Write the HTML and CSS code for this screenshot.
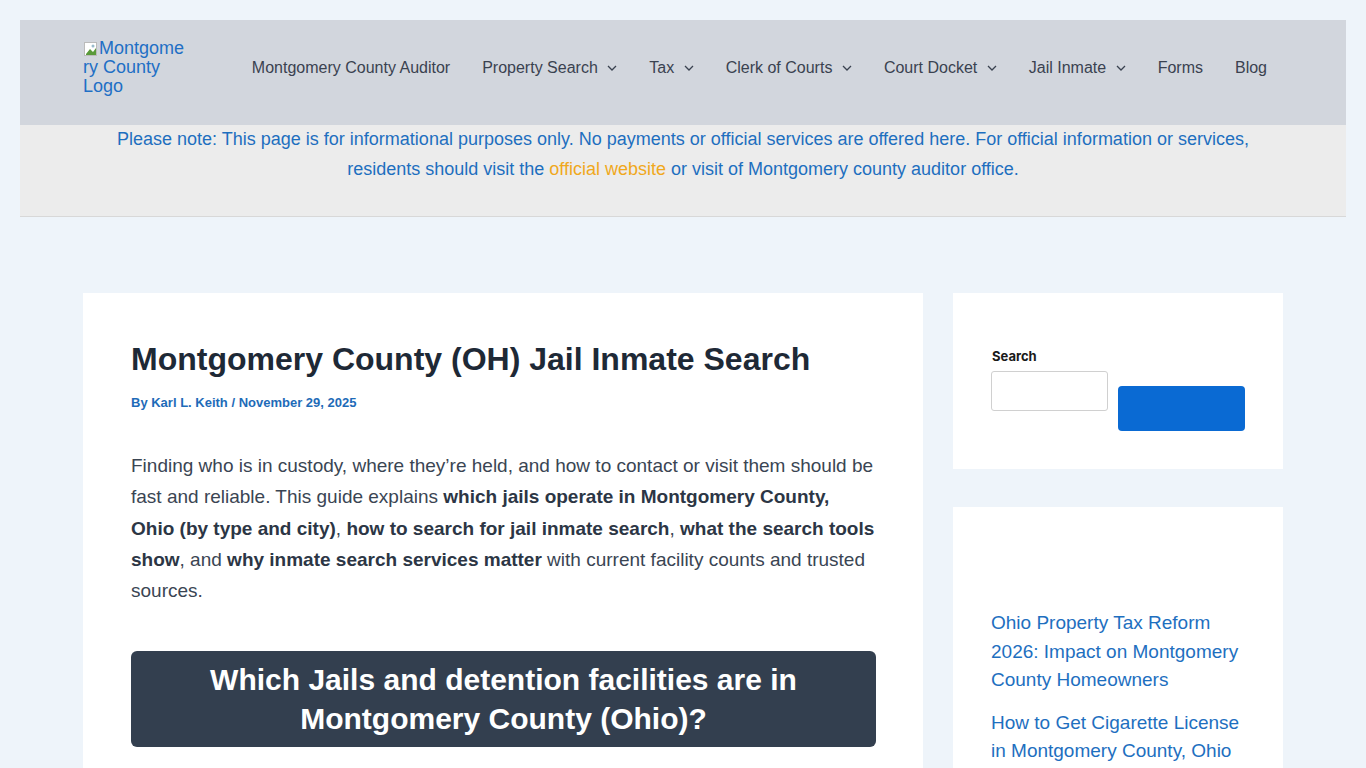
FILE: index.html
```html
<!DOCTYPE html>
<html lang="en">
<head>
<meta charset="utf-8">
<title>Montgomery County (OH) Jail Inmate Search</title>
<link rel="stylesheet" href="styles.css">
</head>
<body>
<header class="site-header">
  <div class="header-inner">
    <a class="logo" href="#"><svg class="broken" width="16" height="16" viewBox="0 0 16 16"><rect x="1.5" y="1.5" width="12" height="13" fill="#fff" stroke="#bbb"/><path d="M3 13 L7 8 L10 11 L13 7 V14 H3Z" fill="#5a9a3a"/><circle cx="10" cy="5" r="1.5" fill="#9bc"/></svg>Montgomery County Logo</a>
    <nav class="main-nav">
      <a href="#">Montgomery County Auditor</a>
      <a href="#">Property Search<svg class="chev" viewBox="0 0 10 6"><path d="M1 1 L5 5 L9 1" fill="none" stroke="#3a4250" stroke-width="1.3"/></svg></a>
      <a href="#">Tax<svg class="chev" viewBox="0 0 10 6"><path d="M1 1 L5 5 L9 1" fill="none" stroke="#3a4250" stroke-width="1.3"/></svg></a>
      <a href="#">Clerk of Courts<svg class="chev" viewBox="0 0 10 6"><path d="M1 1 L5 5 L9 1" fill="none" stroke="#3a4250" stroke-width="1.3"/></svg></a>
      <a href="#">Court Docket<svg class="chev" viewBox="0 0 10 6"><path d="M1 1 L5 5 L9 1" fill="none" stroke="#3a4250" stroke-width="1.3"/></svg></a>
      <a href="#">Jail Inmate<svg class="chev" viewBox="0 0 10 6"><path d="M1 1 L5 5 L9 1" fill="none" stroke="#3a4250" stroke-width="1.3"/></svg></a>
      <a href="#">Forms</a>
      <a href="#">Blog</a>
    </nav>
  </div>
</header>
<div class="notice">
  <p>Please note: This page is for informational purposes only. No payments or official services are offered here. For official information or services, residents should visit the <a href="#">official website</a> or visit of Montgomery county auditor office.</p>
</div>
<div class="container">
  <main class="article">
    <h1>Montgomery County (OH) Jail Inmate Search</h1>
    <div class="meta">By <a href="#">Karl L. Keith</a> / <span>November 29, 2025</span></div>
    <p class="intro">Finding who is in custody, where they’re held, and how to contact or visit them should be fast and reliable. This guide explains <strong>which jails operate in Montgomery County, Ohio (by type and city)</strong>, <strong>how to search for jail inmate search</strong>, <strong>what the search tools show</strong>, and <strong>why inmate search services matter</strong> with current facility counts and trusted sources.</p>
    <h2 class="section-box">Which Jails and detention facilities are in Montgomery County (Ohio)?</h2>
  </main>
  <aside class="sidebar">
    <div class="widget search-widget">
      <label class="search-label" for="s">Search</label>
      <div class="search-row">
        <input id="s" class="search-input" type="text">
        <button class="search-btn" type="button"></button>
      </div>
    </div>
    <div class="widget posts-widget">
      <ul class="post-list">
        <li><a href="#">Ohio Property Tax Reform 2026: Impact on Montgomery County Homeowners</a></li>
        <li><a href="#">How to Get Cigarette License in Montgomery County, Ohio</a></li>
      </ul>
    </div>
  </aside>
</div>
</body>
</html>
```
FILE: styles.css
```css
* { box-sizing: border-box; }
html, body { margin: 0; padding: 0; }
body {
  background: #eef4fa;
  font-family: "Liberation Sans", Arial, sans-serif;
  color: #3a4553;
  padding: 20px 20px 0;
}
a { text-decoration: none; }

.site-header {
  background: #d2d6dd;
  height: 105px;
}
.header-inner {
  width: 1200px;
  margin: 0 auto;
  height: 100%;
  display: flex;
  align-items: center;
  justify-content: space-between;
}
.logo {
  position: relative;
  display: block;
  width: 107px;
  font-size: 18px;
  line-height: 19px;
  color: #1f6fc5;
  overflow-wrap: anywhere;
  text-indent: 16px;
  margin-top: -10px;
}
.broken {
  position: absolute;
  left: 0;
  top: 2px;
  width: 16px;
  height: 16px;
}
.main-nav {
  display: flex;
  align-items: center;
  margin-top: -10px;
}
.main-nav a {
  font-size: 16px;
  color: #3a4250;
  padding: 0 16px;
  display: flex;
  align-items: center;
}
.chev { width: 10px; height: 6px; margin-left: 9.5px; margin-top: 1px; }

.notice {
  background: #ececec;
  border-bottom: 1px solid #d8d8d8;
  padding: 0 0 31px;
  text-align: center;
}
.notice p {
  margin: 0 auto;
  width: 1160px;
  font-size: 18px;
  line-height: 30px;
  color: #1e6fbf;
  position: relative;
  top: -1px;
}
.notice a { color: #f0a81c; }

.container {
  width: 1200px;
  margin: 76px auto 0;
  display: flex;
  gap: 30px;
  align-items: flex-start;
}
.article {
  width: 840px;
  background: #fff;
  padding: 48px 47px 40px 48px;
}
.article h1 {
  margin: 0;
  font-size: 32px;
  line-height: 36px;
  font-weight: 700;
  color: #1e2936;
}
.meta {
  margin-top: 18px;
  font-size: 13px;
  font-weight: 700;
  color: #1e6bb8;
}
.meta a { color: #1e6bb8; }
.intro {
  margin: 40px 0 0;
  font-size: 19px;
  line-height: 31.3px;
  color: #3a4553;
}
.intro strong { color: #2c3645; }
.section-box {
  margin: 45px 0 0;
  background: #333f4f;
  border-radius: 6px;
  color: #fff;
  text-align: center;
  font-size: 30px;
  line-height: 39px;
  font-weight: 700;
  padding: 9px 40px;
}

.sidebar {
  width: 330px;
  display: flex;
  flex-direction: column;
  gap: 38px;
}
.widget {
  background: #fff;
  padding: 38px 38px;
}
.search-widget { height: 176px; padding-top: 55px; }
.search-label {
  display: block;
  font-family: Inter, "Liberation Sans", sans-serif;
  font-size: 13px;
  font-weight: 700;
  color: #1a1a1a;
  margin-bottom: 7px;
  margin-left: 1px;
}
.search-row { display: flex; align-items: flex-start; gap: 10px; }
.search-input {
  width: 117px;
  height: 40px;
  border: 1px solid #d0d0d0;
  border-radius: 3px;
  background: #fff;
  margin: 0;
}
.search-btn {
  width: 127px;
  height: 45px;
  margin-top: 15px;
  border: 0;
  border-radius: 4px;
  background: #0a6ad3;
}
.posts-widget { height: 300px; padding-top: 102px; }
.post-list { list-style: none; margin: 0; padding: 0; }
.post-list li { margin-bottom: 14px; }
.post-list a {
  font-size: 19px;
  line-height: 28.5px;
  color: #1e6fbf;
}
```
